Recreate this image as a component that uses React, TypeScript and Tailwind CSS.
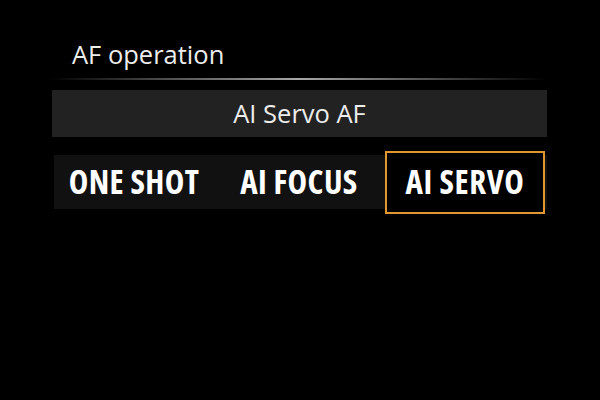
import React from "react";

export default function App() {
  const options = [
    { label: "ONE SHOT", w: "w-[160px]" },
    { label: "AI FOCUS", w: "w-[170px]" },
    { label: "AI SERVO", w: "w-[160px]" },
  ];
  const selected = 2;
  return (
    <div className="w-[600px] h-[400px] bg-black overflow-hidden" style={{ fontFamily: '"Open Sans", "Noto Sans", sans-serif' }}>
      <div className="ml-[52px] w-[495px] pt-[38px]">
        <div className="pl-[20px] text-[25.5px] leading-[32px] text-[#ededed]">AF operation</div>
        <div className="mt-[8px] -ml-[2px] h-[2px] bg-gradient-to-r from-transparent via-[#a8a8a8] to-transparent" />
        <div className="mt-[10px] h-[47px] bg-[#222222] flex items-center justify-center text-[25.5px] text-[#ededed]">
          AI Servo AF
        </div>
        <div className="mt-[18px] ml-[2px] h-[54px] bg-[#111111] flex items-center">
          {options.map((o, i) => (
            <div
              key={o.label}
              className={
                i === selected
                  ? `${o.w} shrink-0 h-[63px] ml-[1px] border-2 border-[#e0972f] bg-black flex items-center justify-center text-[33px] tracking-[0.6px] font-bold font-stretch-75% text-white`
                  : `${o.w} shrink-0 h-[54px] flex items-center justify-center text-[33px] tracking-[0.4px] font-bold font-stretch-75% text-white`
              }
            >
              {o.label}
            </div>
          ))}
        </div>
      </div>
    </div>
  );
}
